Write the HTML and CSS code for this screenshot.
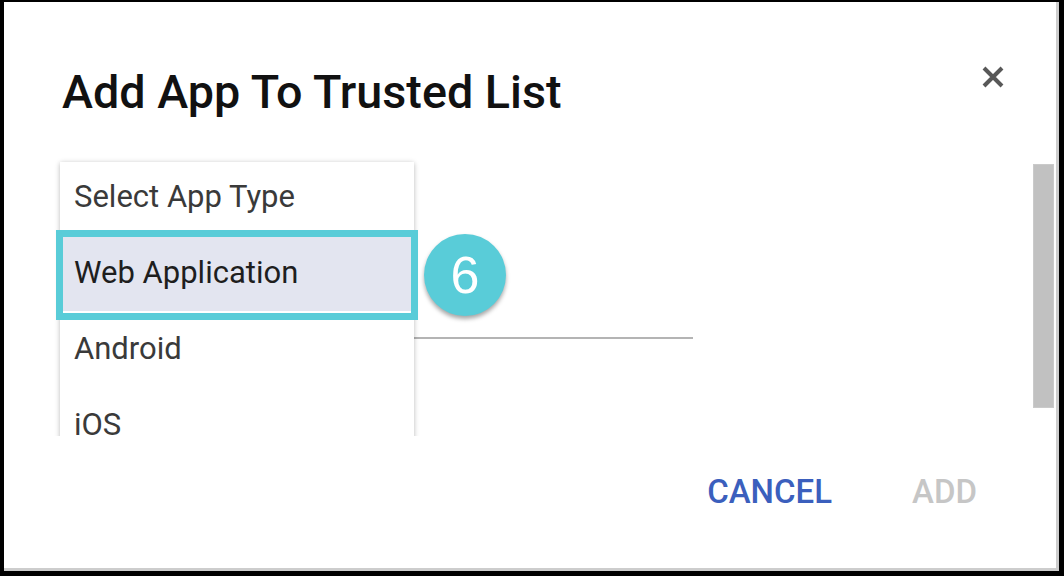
FILE: index.html
```html
<!DOCTYPE html>
<html>
<head>
<meta charset="utf-8">
<link rel="stylesheet" href="styles.css">
</head>
<body>
<div class="dialog">
  <div class="header">
    <h1 class="title">Add App To Trusted List</h1>
    <button class="close" aria-label="Close">
      <svg width="24" height="24" viewBox="0 0 24 24"><path d="M3 3L21 21M21 3L3 21" stroke="#585858" stroke-width="4" stroke-linecap="butt"/></svg>
    </button>
  </div>
  <div class="body">
    <div class="field"></div>
  </div>
  <div class="actions">
    <button class="btn cancel">CANCEL</button>
    <button class="btn add">ADD</button>
  </div>

  <div class="menu-clip">
    <ul class="menu">
      <li class="item">Select App Type</li>
      <li class="item selected">Web Application</li>
      <li class="item">Android</li>
      <li class="item">iOS</li>
    </ul>
  </div>
  <div class="callout"></div>
  <div class="badge">6</div>
  <div class="scroll-thumb"></div>
</div>
</body>
</html>
```

FILE: styles.css
```css
html, body {
  margin: 0;
  padding: 0;
  background: #000;
  width: 1064px;
  height: 576px;
  overflow: hidden;
}

.dialog {
  position: relative;
  margin: 2px 0 0 4px;
  width: 1052px;
  height: 566px;
  background: #fff;
  border-right: 3px solid #cdcdcd;
  border-bottom: 3px solid #cdcdcd;
  display: flex;
  flex-direction: column;
  font-family: Roboto, "Liberation Sans", sans-serif;
}

.header {
  height: 130px;
  display: flex;
  justify-content: space-between;
  align-items: flex-start;
  padding: 0 49px 0 58px;
  box-sizing: border-box;
}

.title {
  margin: 62px 0 0 0;
  font-size: 46.7px;
  line-height: 56px;
  font-weight: 500;
  color: #111;
}

.close {
  margin-top: 61px;
  padding: 0;
  border: 0;
  background: none;
  width: 28px;
  height: 28px;
  display: flex;
  align-items: center;
  justify-content: center;
}

.body {
  padding-left: 56px;
}

.field {
  width: 633px;
  height: 205px;
  border-bottom: 2px solid #b4b4b4;
}

.actions {
  margin-top: 133px;
  display: flex;
  justify-content: flex-end;
  gap: 80px;
  padding-right: 79px;
}

.btn {
  border: 0;
  background: none;
  padding: 0;
  font-family: Roboto, "Liberation Sans", sans-serif;
  font-size: 33px;
  line-height: 40px;
  font-weight: 500;
}

.cancel { color: #3b5fbd; }
.add { color: #c6c6c6; }

.menu-clip {
  position: absolute;
  left: 46px;
  top: 148px;
  width: 374px;
  height: 286px;
  overflow: hidden;
}

.menu {
  list-style: none;
  margin: 12px 0 0 10px;
  padding: 0;
  width: 354px;
  height: 320px;
  background: #fff;
  box-shadow: 0 1px 5px rgba(0,0,0,0.28);
  overflow: hidden;
}

.item {
  height: 76px;
  line-height: 76px;
  padding-left: 14px;
  font-size: 31px;
  color: #3a3a3a;
}

.item:first-child { margin-top: -3px; }

.item.selected {
  background: #e3e5f0;
  color: #1e1e1e;
}

.callout {
  position: absolute;
  left: 52px;
  top: 228px;
  width: 362px;
  height: 90px;
  box-sizing: border-box;
  border: 7px solid #59ccd8;
}

.badge {
  position: absolute;
  left: 420px;
  top: 232px;
  width: 82px;
  height: 82px;
  border-radius: 50%;
  background: #59ccd8;
  box-shadow: 0 3px 4px rgba(0,0,0,0.35);
  color: #fff;
  font-family: "Liberation Sans", Arial, sans-serif;
  font-size: 52px;
  line-height: 82px;
  text-align: center;
}

.scroll-thumb {
  position: absolute;
  right: 2px;
  top: 162px;
  width: 21px;
  height: 244px;
  background: #c1c1c1;
  box-sizing: border-box;
  border: 1px solid #cacaca;
}
```
